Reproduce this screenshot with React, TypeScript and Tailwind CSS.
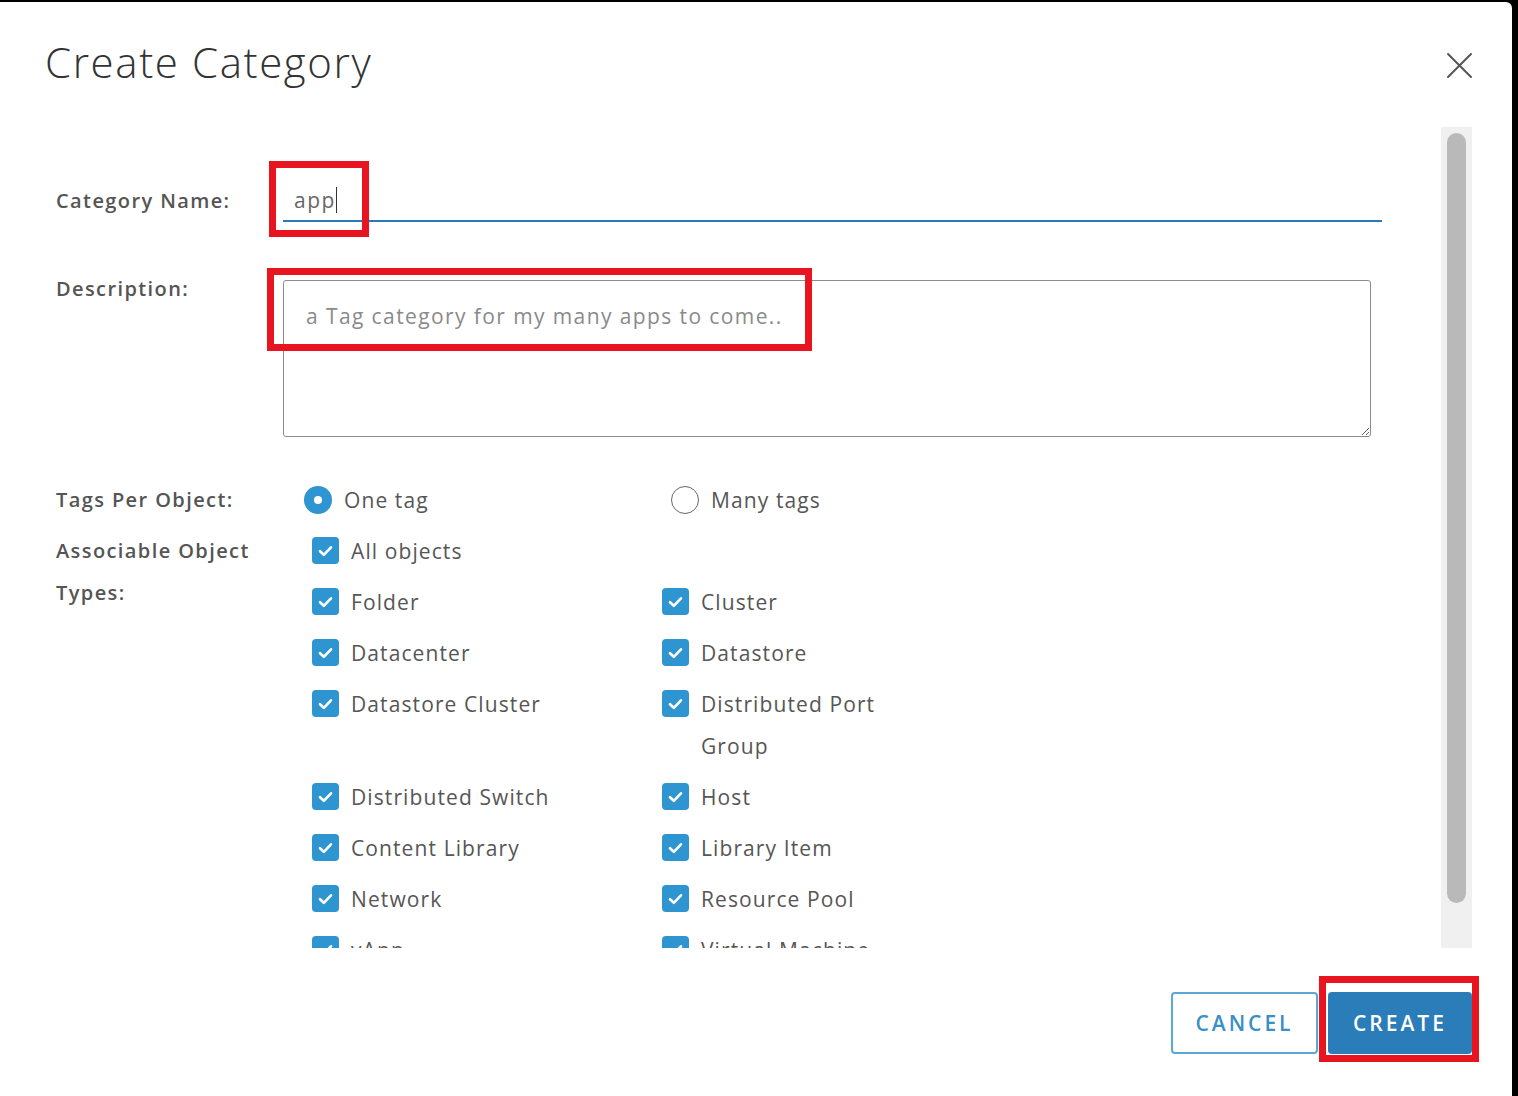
import React from "react";

const font = { fontFamily: '"Open Sans", "Liberation Sans", sans-serif' };

function Check() {
  return (
    <span className="flex h-[27px] w-[27px] shrink-0 items-center justify-center rounded-[4px] bg-[#2f95d0]">
      <svg width="15" height="12" viewBox="0 0 15 12" fill="none">
        <path d="M2 6.2 L5.8 9.8 L13 2.3" stroke="white" strokeWidth="2.6" strokeLinecap="round" strokeLinejoin="round" />
      </svg>
    </span>
  );
}

function CheckItem({ label }: { label: string }) {
  return (
    <div className="flex items-start">
      <div className="mt-[7px]">
        <Check />
      </div>
      <span className="ml-[12px] w-[200px] text-[21px] leading-[42px] tracking-[1.1px] text-[#565656]">{label}</span>
    </div>
  );
}

const items: [string, string | null][] = [
  ["Folder", "Cluster"],
  ["Datacenter", "Datastore"],
  ["Datastore Cluster", "Distributed Port Group"],
  ["Distributed Switch", "Host"],
  ["Content Library", "Library Item"],
  ["Network", "Resource Pool"],
  ["vApp", "Virtual Machine"],
];

const labelCls = "w-[227px] text-[20px] font-semibold leading-[42px] tracking-[1.4px] text-[#555]";

export default function App() {
  return (
    <div className="h-[1096px] w-[1518px] overflow-hidden bg-black pr-[6px] pt-[2px]" style={font}>
      <div className="flex h-[1094px] w-[1512px] flex-col rounded-tr-[6px] bg-white">
        {/* Header */}
        <div className="flex h-[125px] items-start justify-between pl-[45px] pr-[39px] pt-[33px]">
          <h1 className="text-[42px] font-light leading-[54px] tracking-[1.6px] text-[#333]">Create Category</h1>
          <button className="mt-[17px] h-[27px] w-[27px]">
            <svg width="27" height="27" viewBox="0 0 27 27" fill="none">
              <path d="M2 2 L25 25 M25 2 L2 25" stroke="#555" strokeWidth="2" strokeLinecap="round" />
            </svg>
          </button>
        </div>

        {/* Body */}
        <div className="flex h-[821px] pr-[40px]">
          <div className="relative h-full flex-1 overflow-hidden pl-[56px] pt-[53px]">
            {/* Category name */}
            <div className="flex items-start">
              <div className={labelCls}>Category Name:</div>
              <div className="relative h-[42px] w-[1099px] border-b-2 border-[#2a7ab8] pl-[11px] text-[21px] leading-[40px] tracking-[1.5px] text-[#666]">
                app<span className="inline-block h-[26px] w-[1.5px] translate-y-[5px] bg-[#333]" />
                <div className="absolute left-[-14px] top-[-19px] h-[76px] w-[100px] border-[7px] border-[#e8141f]" />
              </div>
            </div>

            {/* Description */}
            <div className="mt-[46px] flex items-start">
              <div className={labelCls}>Description:</div>
              <div className="relative mt-[12px]">
                <textarea
                  readOnly
                  placeholder="a Tag category for my many apps to come.."
                  className="block h-[157px] w-[1088px] rounded-[3px] border-[1.5px] border-[#8c8c8c] px-[22px] pt-[20px] text-[21px] leading-[30px] tracking-[1.4px] text-[#666] outline-none placeholder:text-[#8a8a8a]"
                  style={font}
                />
                <div className="absolute left-[-16px] top-[-12px] h-[83px] w-[545px] border-[7px] border-[#e8141f]" />
              </div>
            </div>

            {/* Tags per object */}
            <div className="mt-[42px] flex items-start">
              <div className={labelCls}>Tags Per Object:</div>
              <div className="flex pl-[21px]">
                <div className="flex w-[367px] items-center">
                  <span className="flex h-[28px] w-[28px] items-center justify-center rounded-full bg-[#2f95d0]">
                    <span className="h-[8px] w-[8px] rounded-full bg-white" />
                  </span>
                  <span className="ml-[12px] text-[21px] leading-[42px] tracking-[1.1px] text-[#565656]">One tag</span>
                </div>
                <div className="flex items-center">
                  <span className="h-[28px] w-[28px] rounded-full border-[1.5px] border-[#666]" />
                  <span className="ml-[12px] text-[21px] leading-[42px] tracking-[1.1px] text-[#565656]">Many tags</span>
                </div>
              </div>
            </div>

            {/* Associable object types */}
            <div className="mt-[9px] flex items-start">
              <div className={labelCls}>
                Associable Object
                <br />
                Types:
              </div>
              <div className="flex flex-col gap-[9px] pl-[29px]">
                <CheckItem label="All objects" />
                {items.map(([a, b]) => (
                  <div key={a} className="grid grid-cols-[350px_260px]">
                    <CheckItem label={a} />
                    {b && <CheckItem label={b} />}
                  </div>
                ))}
              </div>
            </div>
          </div>

          {/* Scrollbar */}
          <div className="flex h-full w-[31px] justify-center bg-[#f0f0f0] pt-[6px]">
            <div className="h-[770px] w-[19px] rounded-full bg-[#b9b9b9]" />
          </div>
        </div>

        {/* Footer */}
        <div className="flex justify-end gap-[10px] pr-[40px] pt-[44px]">
          <button className="h-[62px] w-[147px] rounded-[4px] border-2 border-[#5aa8d6] pt-[2px] text-[21px] font-semibold tracking-[3px] text-[#3a8fc4]">
            CANCEL
          </button>
          <div className="relative">
            <button className="h-[62px] w-[144px] rounded-[4px] bg-[#2a7db8] pt-[2px] text-[21px] font-semibold tracking-[3px] text-white">
              CREATE
            </button>
            <div className="absolute left-[-9px] top-[-16px] h-[86px] w-[160px] border-[7px] border-[#e8141f]" />
          </div>
        </div>
      </div>
    </div>
  );
}
